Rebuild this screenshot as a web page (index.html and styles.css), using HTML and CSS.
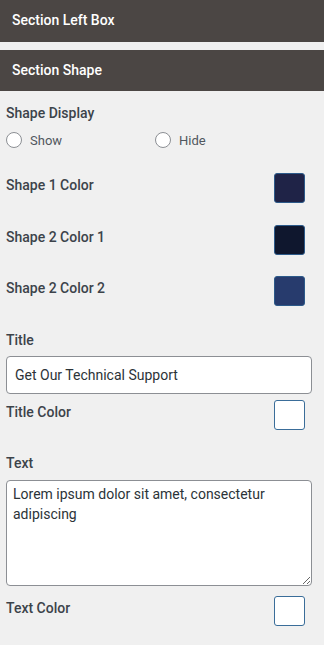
FILE: index.html
```html
<!DOCTYPE html>
<html lang="en">
<head>
  <meta charset="UTF-8">
  <meta name="viewport" content="width=device-width, initial-scale=1.0">
  <title>Section Shape</title>
  <link rel="stylesheet" href="styles.css">
</head>
<body>
  <div class="section-head first">Section Left Box</div>
  <div class="section-head">Section Shape</div>

  <div class="panel">
    <div class="field-label">Shape Display</div>
    <div class="radio-row">
      <label class="radio"><span class="radio-dot"></span>Show</label>
      <label class="radio"><span class="radio-dot"></span>Hide</label>
    </div>

    <div class="color-row first-row">
      <div class="row-label">Shape 1 Color</div>
      <div class="swatch" style="background-color: #1f2347;"></div>
    </div>
    <div class="color-row">
      <div class="row-label">Shape 2 Color 1</div>
      <div class="swatch" style="background-color: #0f172e;"></div>
    </div>
    <div class="color-row last-shape">
      <div class="row-label">Shape 2 Color 2</div>
      <div class="swatch" style="background-color: #273b6d;"></div>
    </div>

    <div class="field-label title-label">Title</div>
    <input class="text-input" type="text" value="Get Our Technical Support">
    <div class="color-row tight">
      <div class="row-label">Title Color</div>
      <div class="swatch white"></div>
    </div>

    <div class="field-label text-label">Text</div>
    <textarea class="text-area">Lorem ipsum dolor sit amet, consectetur adipiscing</textarea>
    <div class="color-row after-area">
      <div class="row-label">Text Color</div>
      <div class="swatch white"></div>
    </div>
  </div>
</body>
</html>
```

FILE: styles.css
```css
body {
  margin: 0;
  background-color: #f0f0f0;
  font-family: Roboto, "Liberation Sans", sans-serif;
  color: #3c434a;
}
.section-head {
  height: 41px;
  line-height: 41px;
  padding-left: 12px;
  background-color: #4b4644;
  color: #ffffff;
  font-size: 14px;
  font-weight: 500;
}
.section-head.first {
  height: 42px;
  line-height: 41px;
  margin-bottom: 8px;
}
.panel {
  padding: 13px 12px 0 6px;
}
.field-label,
.row-label {
  font-size: 14px;
  font-weight: 500;
  line-height: 18px;
  color: #3c434a;
}
.radio-row {
  display: grid;
  grid-template-columns: 149px 1fr;
  margin-top: 9px;
}
.radio {
  display: flex;
  align-items: center;
  gap: 8px;
  height: 18px;
  font-size: 13px;
  color: #50575e;
}
.radio-dot {
  width: 14px;
  height: 14px;
  border: 1px solid #8c8f94;
  border-radius: 50%;
  background-color: #ffffff;
}
.color-row {
  display: flex;
  justify-content: space-between;
  align-items: flex-start;
  margin-top: 22px;
}
.color-row.first-row {
  margin-top: 24px;
}
.color-row.last-shape {
  margin-top: 21px;
}
.color-row.tight {
  margin-top: 6px;
}
.color-row.after-area {
  margin-top: 10px;
}
.row-label {
  padding-top: 3px;
}
.swatch {
  box-sizing: border-box;
  width: 31px;
  height: 30px;
  margin-right: 7px;
  border: 1px solid #2c5a8a;
  border-radius: 3px;
}
.swatch.white {
  background-color: #ffffff;
  border-color: #3a6d99;
}
.title-label {
  margin-top: 25px;
}
.text-label {
  margin-top: 24px;
}
.text-input,
.text-area {
  display: block;
  box-sizing: border-box;
  width: 100%;
  border: 1px solid #8c8f94;
  border-radius: 4px;
  background-color: #ffffff;
  font-family: Roboto, "Liberation Sans", sans-serif;
  font-size: 14px;
  color: #2c3338;
}
.text-input {
  height: 38px;
  margin-top: 7px;
  padding: 0 8px;
}
.text-area {
  height: 106px;
  margin-top: 8px;
  padding: 3px 6px;
  line-height: 20px;
  resize: vertical;
}
```
